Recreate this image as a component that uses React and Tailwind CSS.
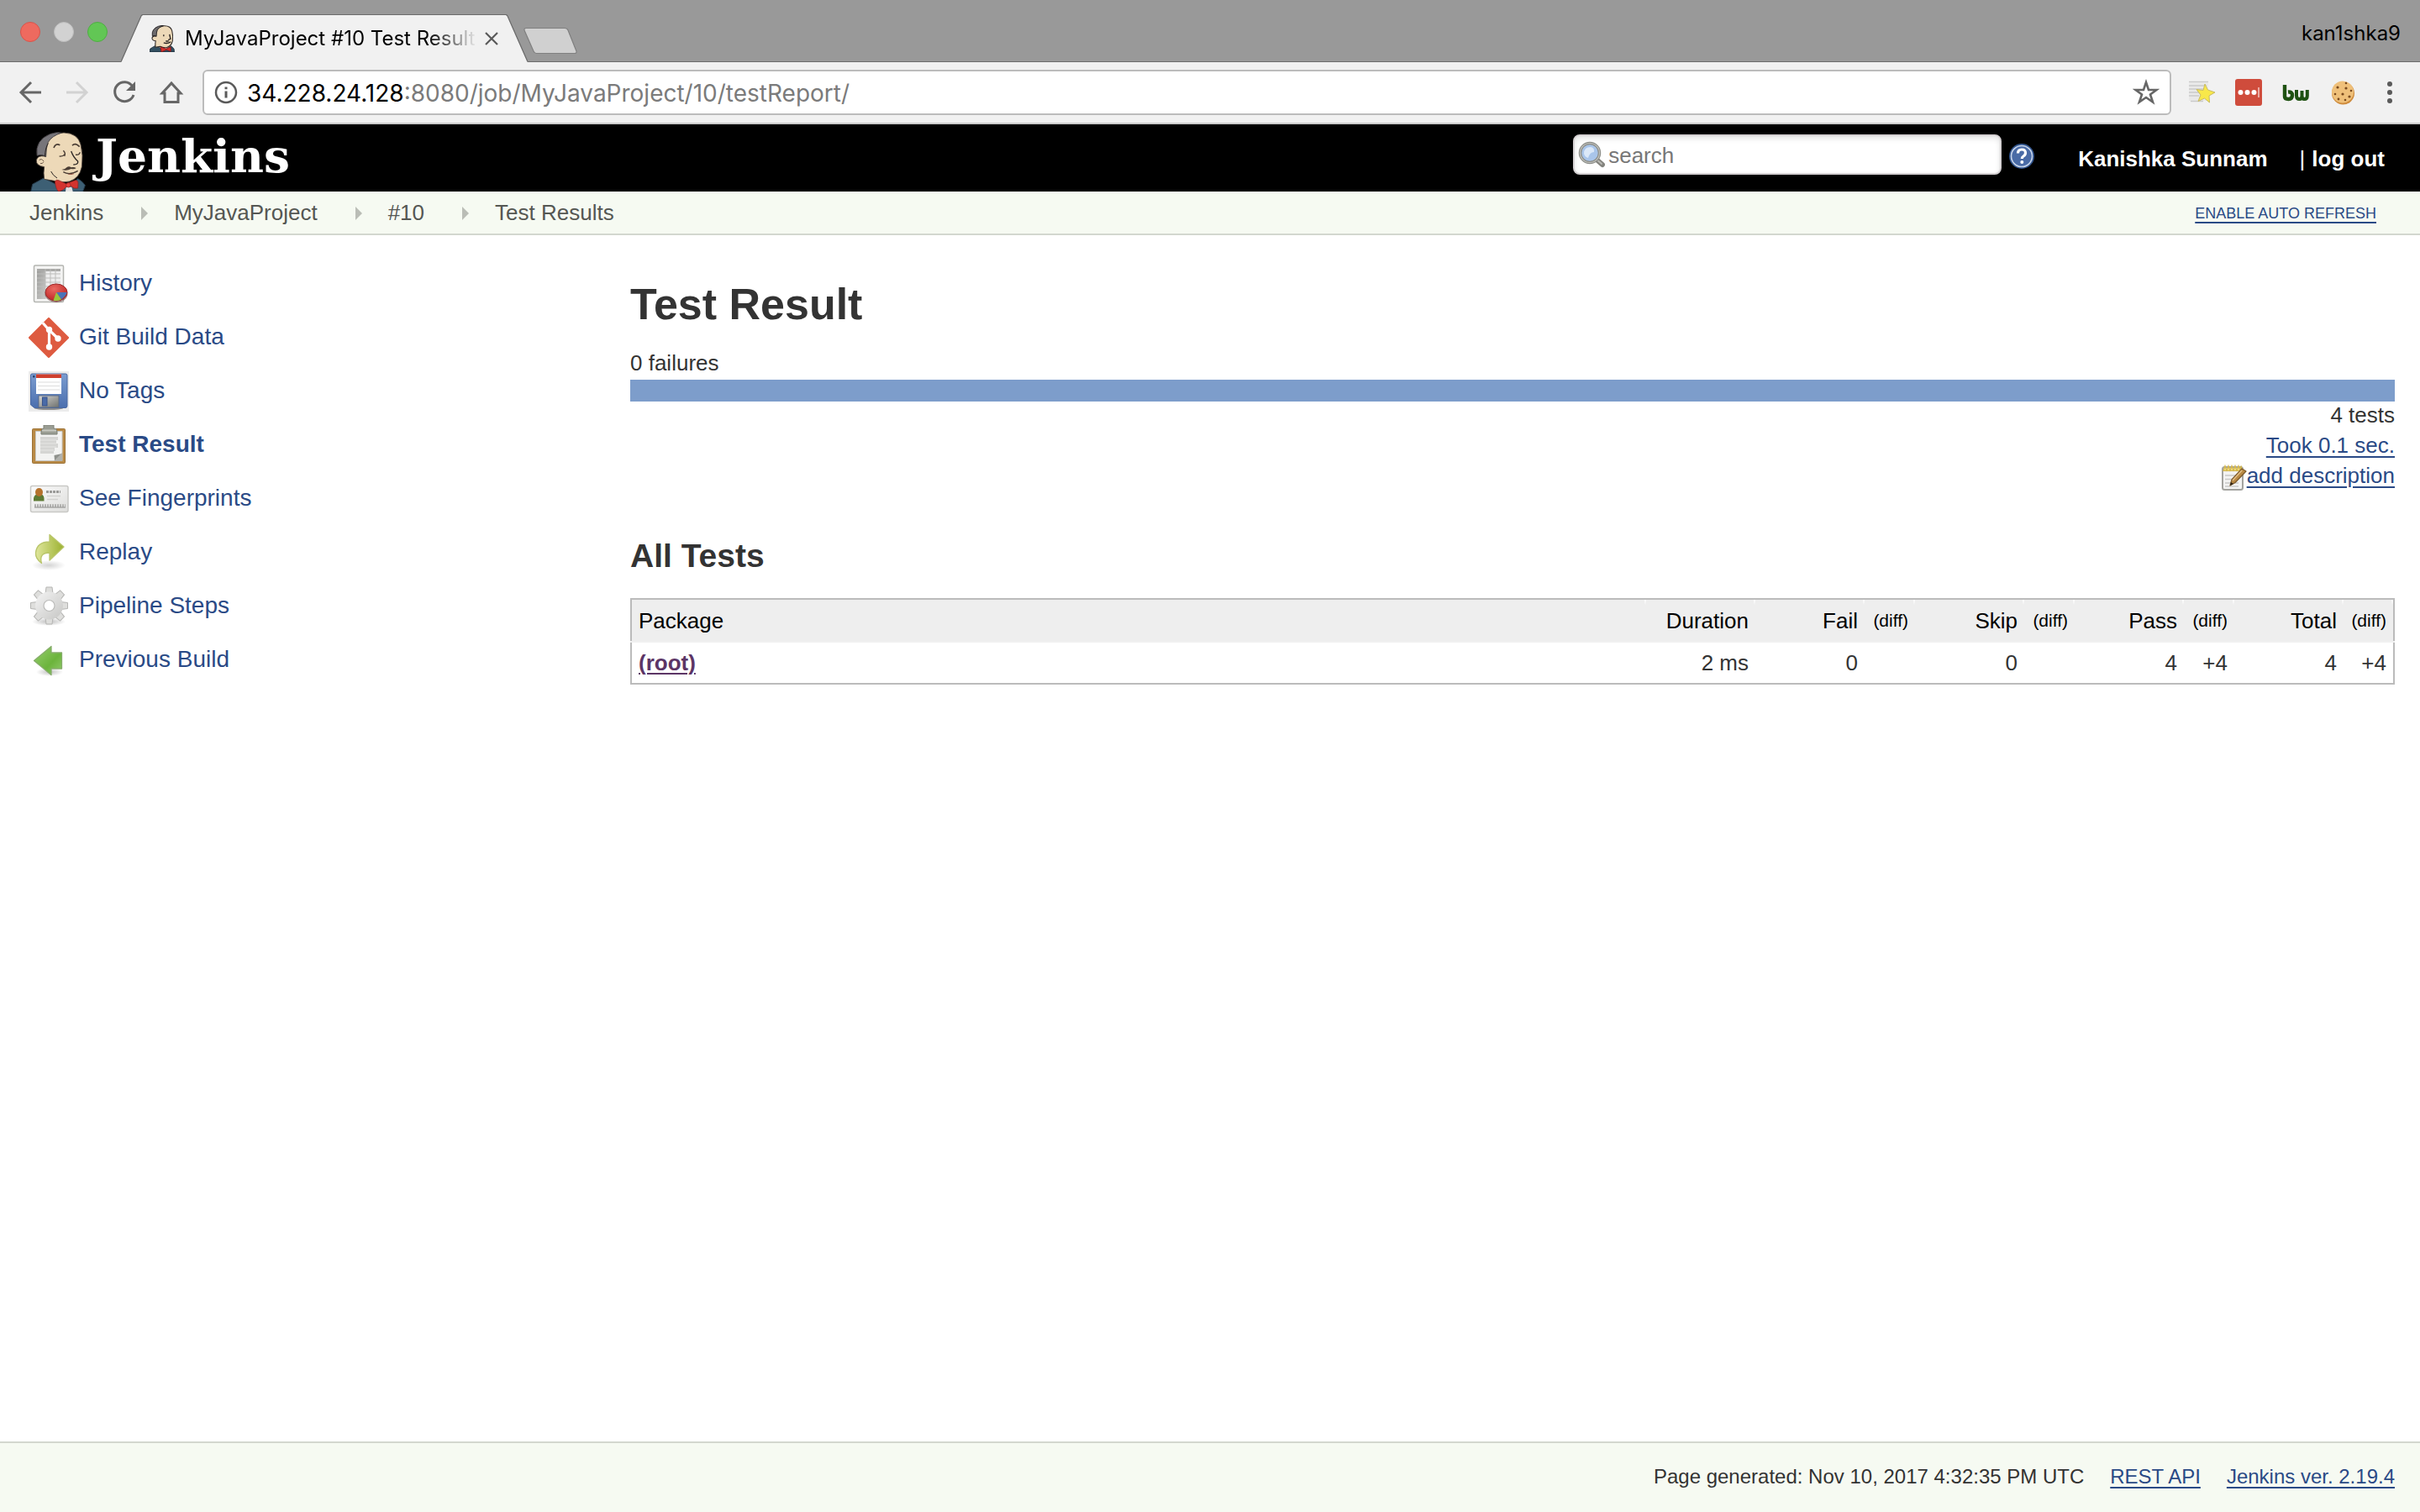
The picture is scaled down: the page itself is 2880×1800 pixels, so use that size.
import React from "react";

function Butler({ className }) {
  return (
    <svg viewBox="0 0 300 234" className={className} aria-hidden="true">
      <path d="M38 234L44 208Q66 196 84 186L128 208L176 214L206 188Q224 198 232 212L224 234Z" fill="#3d5f74" stroke="#24394a" strokeWidth="3" />
      <path d="M96 60Q108 26 156 24Q206 26 216 66Q226 104 220 146Q212 186 176 198Q150 204 122 196L86 190Q82 168 86 146Q56 142 58 122Q62 104 88 108Q84 76 96 60Z" fill="#edd9b8" stroke="#4a4038" strokeWidth="2.500" />
      <path d="M60 106Q52 50 108 28Q132 20 148 24Q112 36 100 58Q92 78 92 110Q80 100 60 106Z" fill="#77757a" stroke="#3a3638" strokeWidth="2.500" />
      <path d="M88 110Q90 76 100 62" fill="none" stroke="#2a2422" strokeWidth="3" />
      <path d="M68 122Q76 114 84 126M72 134Q80 136 84 128" fill="none" stroke="#6b5646" strokeWidth="3" />
      <path d="M120 78Q126 60 142 68M186 70Q196 58 212 74" fill="none" stroke="#4a3d34" strokeWidth="5" />
      <path d="M140 108Q152 110 160 100M154 88Q164 98 158 108M198 102Q210 106 214 94" fill="none" stroke="#4a3d34" strokeWidth="4" />
      <path d="M182 90Q190 112 206 126Q208 138 190 138" fill="none" stroke="#2a2422" strokeWidth="4" />
      <path d="M148 156Q160 156 166 148Q174 142 182 148Q192 146 200 150Q194 156 182 153Q166 162 148 156Z" fill="#4a3d34" />
      <path d="M154 164Q176 178 206 160" fill="none" stroke="#4a3d34" strokeWidth="4" />
      <path d="M172 172Q184 174 192 170" fill="none" stroke="#9a5a4a" strokeWidth="3" />
      <path d="M110 162Q116 176 132 186" fill="none" stroke="#2a2422" strokeWidth="3" />
      <path d="M164 218H184L188 234H162Z" fill="#e4e4e4" />
      <path d="M124 198Q128 190 138 194L164 206L196 194Q206 192 207 204L206 222Q192 226 180 214H168Q156 230 138 234Q128 230 124 198Z" fill="#d3342f" stroke="#8d2220" strokeWidth="2" />
      <circle cx="172" cy="211" r="8" fill="#e8423d" stroke="#8d2220" strokeWidth="2" />
    </svg>
  );
}

function HistoryIcon() {
  return (
    <svg viewBox="0 0 48 48" className="size-12" aria-hidden="true">
      <defs>
        <linearGradient id="hi" x1="0" y1="0" x2="1" y2="1"><stop offset="0" stopColor="#9b9b99" /><stop offset="1" stopColor="#c9c9c7" /></linearGradient>
        <radialGradient id="pie" cx=".4" cy=".3" r=".8"><stop offset="0" stopColor="#ea6a63" /><stop offset="1" stopColor="#b91d1d" /></radialGradient>
      </defs>
      <rect x="6.500" y="2" width="35" height="43.500" rx="1.500" fill="#f4f4f3" stroke="#b4b5b1" strokeWidth="1.500" />
      <rect x="10" y="6" width="28" height="36" fill="#eeeeee" />
      <path d="M10 6H20V42H10Z" fill="url(#hi)" />
      <rect x="10" y="6" width="28" height="3" fill="#a9a9a7" />
      <path d="M10 12H38M10 17H38M10 22H38M10 27H38M10 32H38M10 37H38M20 6V42M26 6V42M32 6V42" stroke="#bdbdbb" strokeWidth="1" />
      <ellipse cx="33" cy="36" rx="13.500" ry="10" fill="#5b1414" opacity=".5" />
      <ellipse cx="33" cy="34" rx="13" ry="10" fill="url(#pie)" stroke="#9e2a2a" />
      <path d="M33 34H45.500Q45 38 39 42.500Z" fill="#4a74b8" />
      <path d="M33 34L39 42.500Q34 45 29.500 43.500Z" fill="#9ac73c" />
    </svg>
  );
}

function GitIcon() {
  return (
    <svg viewBox="0 0 48 48" className="size-12" aria-hidden="true">
      <path d="M24 1.500L46.500 24L24 46.500L1.500 24Z" fill="#de5b40" stroke="#de5b40" strokeWidth="3" strokeLinejoin="round" />
      <path d="M17 6.500L24 14.500L35 25M24.500 14V35" stroke="#fff" strokeWidth="3.200" fill="none" />
      <circle cx="24.500" cy="14.500" r="3.700" fill="#fff" />
      <circle cx="35" cy="25" r="3.700" fill="#fff" />
      <circle cx="24.500" cy="35" r="3.700" fill="#fff" />
    </svg>
  );
}

function FloppyIcon() {
  return (
    <svg viewBox="0 0 48 48" className="size-12" aria-hidden="true">
      <defs>
        <linearGradient id="fl" x1="0" y1="0" x2="0" y2="1"><stop offset="0" stopColor="#7c9dd0" /><stop offset="1" stopColor="#4b6fae" /></linearGradient>
        <linearGradient id="sh" x1="0" y1="0" x2="1" y2="1"><stop offset="0" stopColor="#d5d5d3" /><stop offset="1" stopColor="#6f716d" /></linearGradient>
      </defs>
      <rect width="48" height="48" fill="#ececec" />
      <ellipse cx="24" cy="44" rx="17" ry="2" fill="#8d8d8d" />
      <path d="M4 3H44Q46 3 46 5V41Q46 43.500 44 43.500H7L2.500 40V5Q2.500 3 4 3Z" fill="url(#fl)" stroke="#4a6aa3" />
      <rect x="9" y="3.500" width="30" height="23.500" fill="#fff" />
      <rect x="9" y="3.500" width="30" height="4.500" fill="#d0402e" />
      <path d="M11 13H37M11 17.500H37M11 22H37" stroke="#dcdcdc" strokeWidth="1.200" />
      <rect x="12" y="29" width="24" height="14" fill="url(#sh)" stroke="#5b6a86" />
      <rect x="16.500" y="31" width="5.500" height="10" fill="#4a6ba8" stroke="#37528a" />
      <rect x="5" y="5" width="2.500" height="2.500" fill="#2c4672" />
    </svg>
  );
}

function ClipboardIcon() {
  return (
    <svg viewBox="0 0 48 48" className="size-12" aria-hidden="true">
      <rect x="4.500" y="4.500" width="39" height="41" rx="1" fill="#b98a46" stroke="#9c7236" strokeWidth="1" />
      <path d="M8.500 7.500H40V42.500H8.500Z" fill="#f3f3f2" stroke="#c9c9c5" />
      <path d="M14 14H35V18H33V22H35V27H31V31H30V34H14Z" fill="#d5d5d3" />
      <path d="M14 18H33M14 22H33M14 26H33M14 30H30" stroke="#e6e6e4" strokeWidth="1" />
      <path d="M31 42.500L30.500 36L40 34V36L33 42.500Z" fill="#8f918c" />
      <path d="M30 43L40 33V43Z" fill="#b0b1ad" />
      <path d="M18 0H30V4Q34 4 34 8V11H15V8Q15 4 18 4Z" fill="#9a9d93" stroke="#7d8077" strokeWidth="1" />
      <rect x="16" y="5.500" width="17" height="2" fill="#c6c8c0" />
    </svg>
  );
}

function CardIcon() {
  return (
    <svg viewBox="0 0 48 48" className="size-12" aria-hidden="true">
      <defs><linearGradient id="cd" x1="0" y1="0" x2="1" y2="1"><stop offset="0" stopColor="#fbfbfb" /><stop offset="1" stopColor="#dededc" /></linearGradient></defs>
      <rect x="2.500" y="8.500" width="44.500" height="31" rx="2" fill="url(#cd)" stroke="#c9c9c6" strokeWidth="1.500" />
      <path d="M6 26.500V23Q7 18 12.500 18Q18 18 18.500 23V26.500Z" fill="#5d7a34" />
      <ellipse cx="12.500" cy="16" rx="4.500" ry="5" fill="#b5722c" />
      <path d="M21 15.500H38" stroke="#9b9b99" strokeWidth="3" strokeDasharray="3 1" />
      <path d="M22 20.500H38M22 24.500H35" stroke="#d2d2d0" strokeWidth="1.500" />
      <path d="M7 32H44" stroke="#b1b1af" strokeWidth="3.500" strokeDasharray="2 1" />
      <path d="M7 34H44" stroke="#8a8a88" strokeWidth="1" />
    </svg>
  );
}

function ReplayIcon() {
  return (
    <svg viewBox="0 0 48 48" className="size-12" aria-hidden="true">
      <defs>
        <linearGradient id="rp" x1="0" y1="0" x2="1" y2="0"><stop offset="0" stopColor="#dfe69c" /><stop offset="1" stopColor="#9bb12f" /></linearGradient>
        <radialGradient id="rs"><stop offset="0" stopColor="#d4d4d4" /><stop offset="1" stopColor="#fff" /></radialGradient>
      </defs>
      <ellipse cx="24" cy="39" rx="20" ry="6" fill="url(#rs)" />
      <path d="M25 2.500L42 17L25 33V24Q12 24 15.500 36.500Q8 31 8.500 24Q10 11 25 11Z" fill="url(#rp)" stroke="#b9c56a" strokeWidth="1.300" strokeLinejoin="round" />
    </svg>
  );
}

function GearIcon() {
  const teeth = [0, 45, 90, 135, 180, 225, 270, 315];
  return (
    <svg viewBox="0 0 48 48" className="size-12" aria-hidden="true">
      <defs>
        <linearGradient id="gr" x1="0" y1="0" x2="1" y2="1"><stop offset="0" stopColor="#f4f4f4" /><stop offset="1" stopColor="#c6c6c4" /></linearGradient>
        <radialGradient id="gs"><stop offset="0" stopColor="#bdbdbd" /><stop offset="1" stopColor="#fff" /></radialGradient>
      </defs>
      <ellipse cx="24" cy="42" rx="20" ry="5" fill="url(#gs)" />
      <g fill="#dededc" stroke="#b5b5b3" strokeWidth="1">
        {teeth.map((a) => (
          <path key={a} d="M20 9L21 1H28L29 9Z" transform={`rotate(${a} 24.500 23)`} />
        ))}
      </g>
      <circle cx="24.500" cy="23" r="16.500" fill="url(#gr)" />
      <circle cx="24.500" cy="23" r="6.500" fill="#fff" stroke="#bcbcba" strokeWidth="1.200" />
    </svg>
  );
}

function PreviousIcon() {
  return (
    <svg viewBox="0 0 48 48" className="size-12" aria-hidden="true">
      <defs>
        <linearGradient id="pv" x1="0" y1="0" x2="1" y2="1"><stop offset="0" stopColor="#97cf70" /><stop offset=".6" stopColor="#6cb43c" /><stop offset="1" stopColor="#93cb6e" /></linearGradient>
        <radialGradient id="ps"><stop offset="0" stopColor="#c3c3c3" /><stop offset="1" stopColor="#fff" /></radialGradient>
      </defs>
      <ellipse cx="25" cy="38" rx="16" ry="5" fill="url(#ps)" />
      <path d="M6.500 24.500L27 7.500V15H39.500V34H27V41.500Z" fill="url(#pv)" stroke="#86ad6b" strokeWidth="1.300" strokeLinejoin="round" />
    </svg>
  );
}

function NotepadIcon() {
  return (
    <svg viewBox="0 0 32 32" className="size-8 shrink-0" aria-hidden="true">
      <rect x="3" y="4" width="24" height="27" rx="2.500" fill="#f3f3f2" stroke="#a3a39f" strokeWidth="2" />
      <path d="M6 14H22M6 18.500H20M6 23H22M6 27H22" stroke="#c9c9c7" strokeWidth="1.300" />
      <path d="M4 8.500L6 2.500L8 8L10 2.500L12 8L14 2.500L16 8L18 2.500L20 8L22 2.500L24 8L25 2.500L26.500 8.500Z" fill="#efd97a" stroke="#d3b64c" strokeWidth="1.200" />
      <path d="M26 6L31 9L18 22.500L12 26L14 19Z" fill="#b98a45" stroke="#7d5a2a" strokeWidth="1.300" strokeLinejoin="round" />
      <path d="M26 8L15 20" stroke="#e3c088" strokeWidth="1.500" />
      <path d="M12 26L13 22L16 24Z" fill="#2e2417" />
    </svg>
  );
}

function SearchIcon() {
  return (
    <svg viewBox="0 0 32 32" className="size-8 shrink-0" aria-hidden="true">
      <path d="M21.500 21.500L29 28" stroke="#84847f" strokeWidth="6" strokeLinecap="round" />
      <path d="M24 23.500L28 27" stroke="#b9b9b4" strokeWidth="2" strokeLinecap="round" />
      <circle cx="14" cy="14" r="11.500" fill="#a9c5ea" stroke="#8b8c87" strokeWidth="3.500" />
      <circle cx="14" cy="14" r="11.500" fill="none" stroke="#c3c4bf" strokeWidth="1.200" />
      <path d="M7 15Q7 7 15 7Q20 8 19 13Q14 13 12 20Q8 19 7 15Z" fill="#dbe8f8" />
    </svg>
  );
}

function HelpIcon() {
  return (
    <svg viewBox="0 0 32 32" className="size-8" aria-hidden="true">
      <circle cx="16" cy="16" r="15" fill="#33568f" />
      <circle cx="16" cy="16" r="12.500" fill="#4a6ba6" stroke="#c8d5ea" strokeWidth="1.600" />
      <path d="M11.500 12.500Q11.500 8 16 8Q20.500 8 20.500 12Q20.500 14.500 18 16Q16.300 17 16.300 19" fill="none" stroke="#fff" strokeWidth="3.200" />
      <circle cx="16.300" cy="23" r="2" fill="#fff" />
    </svg>
  );
}

const TASKS = [
  { label: "History", Icon: HistoryIcon },
  { label: "Git Build Data", Icon: GitIcon },
  { label: "No Tags", Icon: FloppyIcon },
  { label: "Test Result", Icon: ClipboardIcon, current: true },
  { label: "See Fingerprints", Icon: CardIcon },
  { label: "Replay", Icon: ReplayIcon },
  { label: "Pipeline Steps", Icon: GearIcon },
  { label: "Previous Build", Icon: PreviousIcon },
];

const LINK = "text-[#2a4a86] underline decoration-2 underline-offset-4";

function TabStrip() {
  return (
    <div className="flex h-[74px] items-stretch bg-[#999999]">
      <div className="flex w-36 shrink-0 items-center gap-4 border-b border-[#6b6b6b] pl-6 pt-0.5">
        <button aria-label="Close window" className="size-6 rounded-full border border-[#d9534a] bg-[#ee6a5f]" />
        <button aria-label="Minimize window" className="size-6 rounded-full border border-[#bdbdbd] bg-[#d2d2d2]" />
        <button aria-label="Zoom window" className="size-6 rounded-full border border-[#4fae43] bg-[#62c655]" />
      </div>
      <div className="flex shrink-0 items-stretch pt-[17px]">
        <svg viewBox="0 0 26 57" className="h-[57px] w-[26px]" aria-hidden="true">
          <path d="M0 57L24 2Q25 0 26 0V57Z" fill="#f1f1f1" />
          <path d="M0 56.500L24 2Q25 .5 26 .5" fill="none" stroke="#6b6b6b" strokeWidth="1.300" />
        </svg>
        <div className="flex w-[432px] items-center border-t border-[#6b6b6b] bg-[#f1f1f1] pl-2">
          <svg viewBox="0 0 200 212" className="h-8 w-[30px] shrink-0" aria-hidden="true">
            <g transform="translate(-38 -22)">
              <path d="M38 234L44 208Q66 194 84 184L128 206L176 212L206 186Q224 196 232 212L234 234Z" fill="#335061" stroke="#1d2f3b" strokeWidth="6" />
              <path d="M96 60Q108 26 156 26Q206 26 216 66Q226 104 220 146Q212 186 176 198Q150 204 122 190L84 196Q82 168 86 146Q56 142 58 122Q62 104 88 108Q84 76 96 60Z" fill="#edd9b8" stroke="#2a2422" strokeWidth="7" />
              <path d="M60 106Q52 50 108 30Q132 22 148 26Q112 36 100 58Q92 78 92 110Q80 100 60 106Z" fill="#6d6b6d" stroke="#231f20" strokeWidth="6" />
              <path d="M150 96V110M196 94L204 130Q196 138 186 136M150 160Q176 172 206 154M166 148H190" fill="none" stroke="#2a2422" strokeWidth="9" />
              <path d="M124 194L168 208L206 194V230L172 216L132 234Z" fill="#d3302d" stroke="#7d1614" strokeWidth="5" />
            </g>
          </svg>
          <span className="ml-3 w-[348px] overflow-hidden whitespace-nowrap bg-linear-to-r from-black from-80% to-[#f1f1f1] bg-clip-text font-['Inter',sans-serif] text-[24px] leading-8 text-transparent">
            MyJavaProject #10 Test Result
          </span>
          <button aria-label="Close tab" className="ml-2 shrink-0">
            <svg viewBox="0 0 18 18" className="size-[18px]" aria-hidden="true">
              <path d="M2 2L16 16M16 2L2 16" stroke="#5a5a5a" strokeWidth="2.200" />
            </svg>
          </button>
        </div>
        <svg viewBox="0 0 26 57" className="h-[57px] w-[26px]" aria-hidden="true">
          <path d="M26 57L2 2Q1 0 0 0V57Z" fill="#f1f1f1" />
          <path d="M26 56.500L2 2Q1 .5 0 .5" fill="none" stroke="#6b6b6b" strokeWidth="1.300" />
        </svg>
      </div>
      <div className="flex flex-1 items-start justify-between border-b border-[#6b6b6b] pr-[23px]">
        <button aria-label="New tab" className="-ml-1.5 mt-8">
          <svg viewBox="0 0 66 34" className="h-[34px] w-[66px]" aria-hidden="true">
            <path d="M4 1.500H50Q53 1.500 54 4L64 29Q64.500 31.500 62 31.500H16Q14 31.500 13 29L2 4Q1.500 1.500 4 1.500Z" fill="#d0d0d0" stroke="#808080" strokeWidth="1.200" />
          </svg>
        </button>
        <button className="mt-6 font-['Inter',sans-serif] text-[24px] leading-8 text-black">kan1shka9</button>
      </div>
    </div>
  );
}

function Toolbar() {
  return (
    <div className="flex h-[74px] items-center border-b-2 border-[#cccccc] bg-[#f1f1f1] pl-5 pr-5">
      <button aria-label="Back" className="shrink-0">
        <svg viewBox="0 0 32 32" className="size-8" aria-hidden="true"><path d="M29 16H5M17 4L5 16L17 28" fill="none" stroke="#666666" strokeWidth="3" /></svg>
      </button>
      <button aria-label="Forward" className="ml-6 shrink-0">
        <svg viewBox="0 0 32 32" className="size-8" aria-hidden="true"><path d="M3 16H27M15 4L27 16L15 28" fill="none" stroke="#d2d2d2" strokeWidth="3" /></svg>
      </button>
      <button aria-label="Reload" className="ml-6 shrink-0">
        <svg viewBox="0 0 32 32" className="size-8" aria-hidden="true">
          <path d="M25.500 8.500A11.500 11.500 0 1 0 27 19" fill="none" stroke="#666666" strokeWidth="3" />
          <path d="M29 3V14H18Z" fill="#666666" />
        </svg>
      </button>
      <button aria-label="Home" className="ml-6 shrink-0">
        <svg viewBox="0 0 32 32" className="size-8" aria-hidden="true"><path d="M5 17L16 5L27 17H24V27.500H8V17Z" fill="none" stroke="#666666" strokeWidth="3" /></svg>
      </button>
      <div className="ml-[21px] flex h-[54px] flex-1 items-center rounded-md border-2 border-[#bcbcbc] bg-white pl-3 pr-3">
        <svg viewBox="0 0 28 28" className="size-7 shrink-0" aria-hidden="true">
          <circle cx="14" cy="14" r="12" fill="none" stroke="#5a5a5a" strokeWidth="2.500" />
          <path d="M12.500 12.500H15.500V20.500H12.500ZM12.500 7.500H15.500V10.300H12.500Z" fill="#5a5a5a" />
        </svg>
        <div role="textbox" aria-label="Address" className="ml-[11px] flex-1 whitespace-nowrap pt-0.5 font-['Inter',sans-serif] text-[28px] leading-9 text-[#7b7b7b]">
          <span className="text-black">34.228.24.128</span>:8080/job/MyJavaProject/10/testReport/
        </div>
        <button aria-label="Bookmark this page">
          <svg viewBox="0 0 32 32" className="size-8" aria-hidden="true">
            <path d="M16 4L19 13H28.500L21 18.500L24 27.500L16 22L8 27.500L11 18.500L3.500 13H13Z" fill="none" stroke="#666666" strokeWidth="2.600" />
          </svg>
        </button>
      </div>
      <div className="ml-5 flex items-center gap-6">
        <button aria-label="Bookmarks extension">
          <svg viewBox="0 0 32 32" className="size-8" aria-hidden="true">
            <path d="M1 5H24V26H1Z" fill="#e9e9e9" />
            <path d="M1 3.500H24M1 8H22M1 12H18M1 16H13M1 20H13M3 26.500H18" stroke="#cacaca" strokeWidth="1.400" />
            <path d="M20 6L23.500 13L32 16L25 20L25.500 28L19.500 23L12 26.500L15 19L10 12.500L18 13.500Z" fill="#f8e84a" stroke="#c9bb62" strokeWidth="1" />
          </svg>
        </button>
        <button aria-label="Password extension">
          <svg viewBox="0 0 32 32" className="size-8" aria-hidden="true">
            <rect width="32" height="32" rx="3" fill="#cf4c3c" />
            <circle cx="6.500" cy="16" r="3" fill="#fff" /><circle cx="14.500" cy="16" r="3" fill="#fff" /><circle cx="22.500" cy="16" r="3" fill="#fff" />
            <path d="M28 10V22" stroke="#f3c9c3" strokeWidth="1.500" />
          </svg>
        </button>
        <button aria-label="BuiltWith extension">
          <svg viewBox="0 0 32 32" className="size-8" aria-hidden="true">
            <path d="M3 7V21Q3 24 7.500 24Q12 24 12 19.500Q12 15 7 15.500" fill="none" stroke="#1f5212" strokeWidth="4.400" />
            <path d="M17 13V20Q17 24 20.500 24Q23.500 24 23.500 20V14M23.500 20Q23.500 24 26.500 24Q29.800 24 29.800 20V13" fill="none" stroke="#1f5212" strokeWidth="4" />
          </svg>
        </button>
        <button aria-label="Cookie extension">
          <svg viewBox="0 0 32 32" className="size-8" aria-hidden="true">
            <circle cx="16.500" cy="17" r="13.500" fill="#cf8c3d" />
            <circle cx="16" cy="15.500" r="13" fill="#efc07a" />
            <g fill="#7a4a1e"><circle cx="10" cy="10" r="1.600" /><circle cx="20" cy="5" r="1.300" /><circle cx="20" cy="11" r="1.600" /><circle cx="16" cy="18" r="1.600" /><circle cx="7" cy="18" r="1.300" /><circle cx="26" cy="14" r="1.300" /><circle cx="24" cy="21" r="1.600" /><circle cx="11" cy="24" r="1.400" /><circle cx="19" cy="25" r="1.300" /></g>
          </svg>
        </button>
        <button aria-label="Menu">
          <svg viewBox="0 0 32 32" className="size-8" aria-hidden="true">
            <circle cx="16" cy="6" r="3" fill="#5a5a5a" /><circle cx="16" cy="16" r="3" fill="#5a5a5a" /><circle cx="16" cy="26" r="3" fill="#5a5a5a" />
          </svg>
        </button>
      </div>
    </div>
  );
}

function Header() {
  return (
    <header className="flex h-20 items-start bg-black pl-6 pr-[42px] text-white">
      <a href="#jenkins" className="flex items-start">
        <Butler className="mt-0.5 h-[78px] w-[100px]" />
        <span className="-ml-2.5 font-['DejaVu_Serif',serif] text-[55px] font-bold leading-[76px]">Jenkins</span>
      </a>
      <label className="ml-auto mt-3 flex h-12 w-[510px] items-center rounded-lg border-2 border-[#d6d2d4] bg-white pl-1 shadow-[inset_0_3px_6px_#e4e4e4]">
        <SearchIcon />
        <input type="text" aria-label="Search" placeholder="search" className="ml-1 w-full bg-transparent pt-0.5 text-[26px] leading-8 outline-none placeholder:text-[#777777]" />
      </label>
      <a href="#help" aria-label="Help" className="ml-2 mt-[22px]"><HelpIcon /></a>
      <div className="ml-[51px] mt-[25px] flex text-[26px] font-bold leading-8">
        <a href="#user">Kanishka Sunnam</a>
        <span className="ml-[38px] font-normal">|</span>
        <a href="#logout" className="ml-2">log out</a>
      </div>
    </header>
  );
}

function Breadcrumbs() {
  const items = ["Jenkins", "MyJavaProject", "#10", "Test Results"];
  return (
    <nav className="flex h-[52px] items-center border-b-2 border-[#d3d7cf] bg-[#f6faf2] pl-[35px] pr-[52px]">
      <ol className="flex items-center text-[26px] leading-8 text-[#555753]">
        {items.map((t, i) => (
          <li key={t} className="flex items-center">
            {i > 0 && (
              <svg viewBox="0 0 10 16" className="ml-11 mr-[30px] mt-0.5 h-4 w-2.5" aria-hidden="true"><path d="M1 0L9 8L1 16Z" fill="#babdb6" /></svg>
            )}
            <a href={"#crumb" + i}>{t}</a>
          </li>
        ))}
      </ol>
      <a href="#refresh" className={"ml-auto pt-0.5 text-lg " + LINK}>ENABLE AUTO REFRESH</a>
    </nav>
  );
}

const TH = "bg-[#eeeeee] bg-[linear-gradient(#ffffff,#eeeeee)] bg-size-[2px_6px] bg-right-top bg-no-repeat px-2 font-normal";
const GROUPS = ["Fail", "Skip", "Pass", "Total"];
const VALUES = [["0", ""], ["0", ""], ["4", "+4"], ["4", "+4"]];

function ResultsTable() {
  return (
    <table className="mt-6 w-full table-fixed border-collapse border-2 border-[#bbbbbb] text-[26px] leading-8">
      <colgroup>
        <col />
        <col className="w-[130px]" />
        {GROUPS.map((g) => (
          <React.Fragment key={g}>
            <col className="w-[130px]" />
            <col className="w-[60px]" />
          </React.Fragment>
        ))}
      </colgroup>
      <thead>
        <tr className="h-[51px] border-b-2 border-[#f0f0f0] text-right text-black">
          <th scope="col" className={TH + " text-left"}>Package</th>
          <th scope="col" className={TH}>Duration</th>
          {GROUPS.map((g) => (
            <React.Fragment key={g}>
              <th scope="col" className={TH}>{g}</th>
              <th scope="col" className={TH + " text-[21px] whitespace-nowrap"}>(diff)</th>
            </React.Fragment>
          ))}
        </tr>
      </thead>
      <tbody>
        <tr className="h-[50px] text-right">
          <td className="px-2 text-left">
            <a href="#root" className="font-bold text-[#5c3566] underline decoration-2 underline-offset-3">(root)</a>
          </td>
          <td className="px-2">2 ms</td>
          {VALUES.map(([v, d], i) => (
            <React.Fragment key={i}>
              <td className="px-2">{v}</td>
              <td className="px-2">{d}</td>
            </React.Fragment>
          ))}
        </tr>
      </tbody>
    </table>
  );
}

export default function App() {
  return (
    <div className="flex min-h-screen flex-col bg-white font-['Liberation_Sans',Arial,sans-serif] text-[#333333]">
      <TabStrip />
      <Toolbar />
      <Header />
      <Breadcrumbs />
      <div className="flex flex-1 items-start pl-[34px] pr-[30px] pt-[34px]">
        <aside className="w-[716px] shrink-0">
          <ul className="flex flex-col gap-4">
            {TASKS.map(({ label, Icon, current }) => (
              <li key={label}>
                <a href={"#" + label.replace(/ /g, "-")} className={"flex items-start gap-3 text-[28px] leading-[46px] text-[#2a4a86] " + (current ? "font-bold" : "")}>
                  <Icon />
                  <span>{label}</span>
                </a>
              </li>
            ))}
          </ul>
        </aside>
        <main className="min-w-0 flex-1 text-[26px] leading-9">
          <h1 className="mt-4 text-[52px] font-bold leading-[64px]">Test Result</h1>
          <p className="mt-5 pb-0.5">0 failures</p>
          <div className="h-[26px] bg-[#7d9dcb]" />
          <div className="-mt-0.5 flex flex-col items-end">
            <p>4 tests</p>
            <a href="#took" className={LINK}>Took 0.1 sec.</a>
            <a href="#describe" className="flex items-end">
              <NotepadIcon />
              <span className={LINK}>add description</span>
            </a>
          </div>
          <h2 className="mt-[52px] text-[39px] font-bold leading-[52px]">All Tests</h2>
          <ResultsTable />
        </main>
      </div>
      <footer className="flex h-[84px] items-center justify-end gap-[31px] border-t-2 border-[#d3d7cf] bg-[#f6faf2] pb-0.5 pr-[30px] text-[24px] leading-8">
        <span>Page generated: Nov 10, 2017 4:32:35 PM UTC</span>
        <a href="#api" className={LINK}>REST API</a>
        <a href="#version" className={LINK}>Jenkins ver. 2.19.4</a>
      </footer>
    </div>
  );
}
